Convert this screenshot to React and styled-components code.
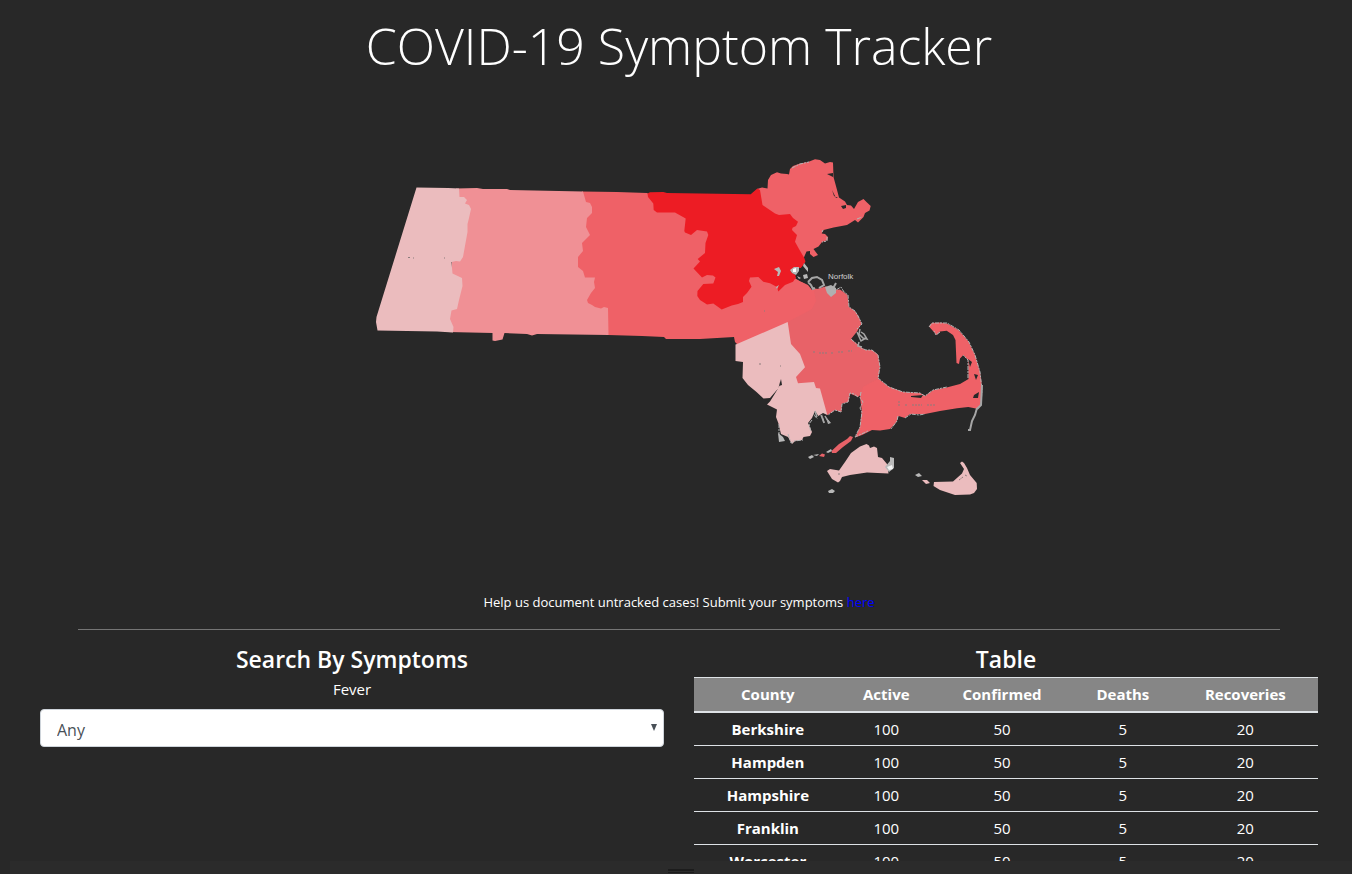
import React from "react";
import styled, { createGlobalStyle } from "styled-components";

const GlobalStyle = createGlobalStyle`
  *, *::before, *::after { box-sizing: border-box; }
  body {
    margin: 0;
    background: #282828;
    color: #fff;
    font-family: "Open Sans", "Noto Sans", sans-serif;
    font-size: 15px;
    line-height: 24px;
  }
`;

const Page = styled.div`
  display: flex;
  flex-direction: column;
  height: 100vh;
  overflow: hidden;
`;

const Content = styled.main`
  flex: 1;
  min-height: 0;
  overflow: hidden;
  padding: 12px 34px 0 40px;
  text-align: center;
`;

const Title = styled.h1`
  margin: 0;
  font-size: 50px;
  font-weight: 300;
  line-height: 68px;
`;

const MapFigure = styled.figure`
  display: flex;
  justify-content: center;
  margin: 60px 0 80px;
`;

const MapDrawing = styled.svg`
  display: block;
  width: 640px;
  max-width: 100%;
`;

const Prompt = styled.p`
  margin: 0;
  font-size: 13px;
  line-height: 24px;
`;

const PromptLink = styled.a`
  color: #0000ff;
  text-decoration: none;
`;

const Divider = styled.hr`
  margin: 15px 38px;
  border: 0;
  border-top: 1px solid #757575;
`;

const Columns = styled.div`
  display: grid;
  grid-template-columns: 1fr 1fr;
  gap: 30px;
`;

const Heading = styled.h2`
  margin: 0 0 4px;
  font-size: 23px;
  font-weight: 600;
  line-height: 28px;
`;

const FieldLabel = styled.label`
  display: block;
  margin-bottom: 8px;
`;

const Select = styled.select`
  display: block;
  width: 100%;
  height: 38px;
  padding: 4px 16px 0;
  appearance: none;
  border: 1px solid #ced4da;
  border-radius: 4px;
  background: #fff;
  color: #495057;
  font: inherit;
  font-size: 16px;
`;

const SelectBox = styled.div`
  position: relative;
`;

const Arrow = styled.svg`
  position: absolute;
  top: 15px;
  right: 7px;
  pointer-events: none;
`;

const Table = styled.table`
  width: 100%;
  border-collapse: collapse;
`;

const HeadCell = styled.th`
  height: 34px;
  padding: 4px;
  border-top: 1px solid #dee2e6;
  border-bottom: 2px solid #dee2e6;
  background: #868686;
  font-weight: 700;
`;

const Cell = styled.td`
  height: 33px;
  padding: 4px;
  border-top: 1px solid #dee2e6;
`;

const Footer = styled.footer`
  display: flex;
  align-items: flex-end;
  justify-content: center;
  height: 13px;
  margin-left: 10px;
  padding-bottom: 1px;
  background: #2b2b2b;
`;

const Grip = styled.div`
  width: 26px;
  height: 4px;
  border-top: 2px solid #1c1c1c;
  border-bottom: 1px solid #1c1c1c;
`;

const shades = {
  pale: "#ebbcbe",
  pink: "#f09095",
  coral: "#ef6167",
  rose: "#e86268",
  red: "#ed1c24",
};

const regions = [
  { name: "Worcester and Norfolk", fill: shades.coral, d: "M582 191.5L617 192 647 193 660 200 745 200 761 240 793 262 790 275 798 280 808 285 812 290 820 287 826 310 790 326 745 346 737 344 735 342 734 337 700 339 666 339 664 337 642 336 608 335 570 320 570 220Z" },
  { name: "Pink counties", fill: shades.pink, d: "M456 188.5L477 188 483 189 507 189 510 190 583 191.5 584 195 586 202 590 203 592 207 592 213 587 218 586 227 590 235 582 243 583 251 578 257 578 267 583 271 585 277.5 595 277.5 594 282 595 288 591 293 587 300 588 303 592 305 595 307 601 308.5 604 307 608 308 608.5 335 537 334 532 335.5 527 334 504.5 333 502.5 339.5 495 341 492.5 340.5 492.5 333 448 332Z" },
  { name: "Berkshire", fill: shades.pale, d: "M416.5 187.5L448 188 459 188.5 459.5 197 464 197 467 200 465 203.5 469 205 471 209 469 218 467.5 224 467.5 232 463 257 460 261.5 456 261 451.5 262 452.5 273.5 462 278 462.5 286 459 300 457 309 451.5 310.5 450 319 453.5 327 453 332.5 437 331.5 377.5 330.5 376 322 376.5 317Z" },
  { name: "Essex", fill: shades.coral, d: "M757 189L762 187.5 767.5 188.5 768 180 771 175 777 172.3 781 173.5 787 174 789 174.5 790 169 793 166 800 163.5 808 162 815 159.3 820 160 825 163.5 830 162 833 162.5 833.5 177 836.5 188 839 197.5 845 201.5 847 205 851 205.5 854 209 858 202 863.5 199 866.5 202 870.7 206 869.5 210.5 865 213 863.5 217 858 222.5 855 220 847 225 833.5 227.5 823.5 230 821.7 233.5 825 234 828 237 827.5 240 822 242 818.5 246.5 813.5 249 818 255 813.5 257 810 254 810 251 806.5 251.5 802 262 750 245Z" },
  { name: "Middlesex", fill: shades.red, d: "M647.5 193.5L650 192.3 663.3 192 667 193 750.7 194.3 757.3 188.5 760 190 762.5 205 775 213.5 779 215 790 214 793 218 798 221.7 796 226 792.5 227.7 792 230 797 235 795 241.7 799 249 804.3 258 806 263 801 268 795 268 791 272 797 276 793 281.7 785 285 778.3 291.5 777 287 770 283.3 763.3 281.7 758.3 277 750 277.5 749 281 751.5 286.7 747 293 743 297 743 302 738 304 731.7 305.5 721.7 309.5 713.3 303.5 707 304.5 700 300 697.3 296 697.5 291 703.3 284 713.3 283.5 715.5 277.5 713 275.5 707 275 702 277.5 693.5 268.5 700 261.5 697.7 259 705 253 705.5 243 708.3 235 707 231.5 697 230 691 235 685 232.5 684.3 231 685.7 218.5 675 212.5 657 212.5 653.7 210 653.3 203.5 648 197Z" },
  { name: "Plymouth", fill: shades.rose, d: "M787.5 322L812 309 816 301 814 291 820 287 826 286 830 290 840 289.5 847.5 295 849 307 855 311 858.5 316 861.5 323.5 857 331.5 851 339 861.5 347.5 865 350 872 350 878 354.5 880 367 878.3 379 865 387 861.5 394 858 397 850 393.5 848.5 402 842 403.5 841.5 412 835 410 827.5 415 810 400 780 370Z" },
  { name: "Bristol", fill: shades.pale, d: "M735.5 344.5L737 344 787.7 322 791 344 800 354 805 367.3 796 377 798 383.3 814 382 816 388 820 388.5 827.3 415 823 413 818.3 416 815 411 812 418 808 423 812 432 810 436 803.5 437 802 440 795 441 792 444 788 437 781 434 778.3 423 776 417 777 409.5 767 404.5 770 401.5 779 387 780.5 380 778.5 388 770 398 763.5 398.5 756.5 392 748 385 742.5 378 743 362 735.5 361Z" },
  { name: "Barnstable", fill: shades.coral, d: "M878 378.5L888.5 386.5 903.3 392 920 393 925 396 933.3 390 946.7 387.5 960 384 968.5 379 968.3 360 963.3 355 960 358.5 959 364 956.5 363 955.5 340 953 335 946.7 330.7 940 331.5 936.7 335 933 331 929 326.5 931.7 323 940 322.5 947 323.5 958.5 330 968.5 341.5 975 355 980 372 981.5 382 981 403 978.3 409 968.3 407 957 408.3 940 411 925 414 910 414 905 418 898.5 416 896.5 422 890 429 880 430.5 872 430 862 435 855 437.5 860 427 861.7 410 860 397 863 387Z" },
  { name: "Elizabeth Islands", fill: shades.rose, d: "M831.5 451L839 444 847 439 850 436 853 437 851 441 843 447 836 453 832 453ZM819 456L822 453.5 825 454.5 824 457Z" },
  { name: "Martha's Vineyard", fill: shades.pale, d: "M827 471L830 469 839 470.5 845 462 851 453 860 446.5 866.5 444 869 445.5 870 448 874 446.5 877 448 878 457 882 458 887 464 888.5 473.5 867 472.5 850 475 842 477 840 481 838 482.5 832 479Z" },
  { name: "Nantucket", fill: shades.pale, d: "M960 463L962 461.5 964 463 967 468 970 475 976.7 483 977 489 974 493 970 494.5 955 495 940 490 933.5 486 934 482 953 481.5 962 473.5 964 469ZM922 480L927 480 930 483 926 484Z" },
];

const coast = [
  "M829 287L836 290 841 287 844 292 848 295 849 307 855 311 858 316 862 324 857 329",
  "M851 339L861 348 866 350 872 350 878 355 880 367 878 378 889 387 903 392 920 393 925 396 933 390 947 387",
  "M858 397L854 394 850 393 848 402 842 404 841 412 835 410 828 415",
  "M861 392L860 398 863 402 860 408 862 412 860 427 855 437 868 431",
  "M779 424L779 434 781 441M788 434L791 443 794 441 803 440M812 420L809 424 811 432",
  "M929 327L932 323 947 323 959 330 969 342 975 355 980 372 982 390 981 405",
  "M940 332L936 335 934 331M968 378L968 360 963 355",
  "M898 416L897 421 891 429M905 418L911 414 919 415 925 414",
  "M792 168L800 164 809 162M857 219L862 217M822 232L823 230M827 237L827 241 822 242",
];

const islets = [
  "M774 269L779 267 781 271 779 276 777 276 778 272ZM776 287L779 285 777 289Z",
  "M790 270L794 267 799 267 799 271 796 275 792 273ZM804 263L808 268 808 272 803 266ZM797 276L801 278 799 279ZM803 275L807 274 808 278 804 279Z",
  "M778 433L783 437 785 441 779 442ZM813 413L818 419 815 417ZM822 414L825 423 823 422ZM826 417L831 423 828 424Z",
  "M808 457L812 455 814 457 810 459ZM813 455L819 454 817 456ZM826 452L831 449 832 451 828 453Z",
  "M828 491L832 489 835 491 833 493 829 493ZM915 475L919 473 922 476 918 477ZM885 467L890 461 890 457 894 458 894 468 889 472Z",
];

const harbors = [
  "M806 261L820 258 822 268 838 280 827 286 817 289 811 285 800 281 795 276 799 273 801 268Z",
  "M827 174L833 173 833 177ZM832 190L834 196 838 198 836 198ZM841 206L846 205 846 208 843 209Z",
  "M781 379L782 385 779 386ZM968 359L972 362 970 367ZM974 374L978 375 976 380ZM974 395L979 392 978 398 973 398ZM911 396L923 395 921 398 911 397Z",
];

const inlets = [
  "M808 282L812 278 817 277 822 280 824 285 819 288M808 282L811 285 813 289 815 288M836 283L831 292",
  "M977 408L975 415 972 421 970 430 968 430M982 385L981 405 977 409",
];

const finePoints = [
  "M860 329L859 334 863 338 867 339 864 334 861 332M857 332L861 341 866 338M859 342L858 346 862 347",
  "M815 411L817 417M821 415L824 423M825 416L829 423",
];

const MassachusettsMap = () => (
  <MapDrawing viewBox="359 140 640 370" role="img" aria-label="Map of Massachusetts counties">
    {regions.map((region) => (
      <path key={region.name} d={region.d} fill={region.fill} />
    ))}
    {harbors.map((d) => (
      <path key={d} d={d} fill="#282828" />
    ))}
    <g fill="none" stroke="#b4b4b4" strokeWidth="1" strokeDasharray="4 1 2 1">
      {coast.map((d) => (
        <path key={d} d={d} />
      ))}
    </g>
    <g fill="#b9b9b9">
      {islets.map((d) => (
        <path key={d} d={d} />
      ))}
    </g>
    <g fill="none" stroke="#a6a6a6" strokeWidth="2">
      {inlets.map((d) => (
        <path key={d} d={d} />
      ))}
    </g>
    <g fill="none" stroke="#a6a6a6" strokeWidth="1.5">
      {finePoints.map((d) => (
        <path key={d} d={d} />
      ))}
    </g>
    <path d="M825 287L831 285 836 288 836 293 831 297 827 293Z" fill="#b0b0b0" />
    <path d="M887 467L892 465 893 469 889 470Z" fill="#f2f2f2" />
    <path d="M793 269L796 268 796 272 793 272Z" fill="#fff" />
    <path d="M408 257.5h2M413 258h1M444 258h1M759 364h2M780 366h1M764 311h1M813 352h2M819 353h8M831 353h3M838 352h6M848 351h4M898 402h3M898 405h3M905 405h2M912 405h10M927 405h8M959 480l4 -3M965 475l2 1M838 474h2" fill="none" stroke="#8b7c7c" strokeWidth="1" strokeDasharray="2 1" />
    <text x="828" y="279" fill="#d0d0d0" fontSize="8" fontFamily="Liberation Sans, sans-serif">Norfolk</text>
  </MapDrawing>
);

const columns = ["County", "Active", "Confirmed", "Deaths", "Recoveries"];
const counties = ["Berkshire", "Hampden", "Hampshire", "Franklin", "Worcester"];

export default function App() {
  return (
    <Page>
      <GlobalStyle />
      <Content>
        <Title>COVID-19 Symptom Tracker</Title>
        <MapFigure>
          <MassachusettsMap />
        </MapFigure>
        <Prompt>
          Help us document untracked cases! Submit your symptoms <PromptLink href="#submit">here</PromptLink>
        </Prompt>
        <Divider />
        <Columns>
          <section>
            <Heading>Search By Symptoms</Heading>
            <FieldLabel htmlFor="fever">Fever</FieldLabel>
            <SelectBox>
              <Select id="fever" defaultValue="Any">
                <option>Any</option>
                <option>Yes</option>
                <option>No</option>
              </Select>
              <Arrow width="6" height="7" viewBox="0 0 6 7" aria-hidden="true">
                <path d="M0 0H6L3 7Z" fill="#495057" />
              </Arrow>
            </SelectBox>
          </section>
          <section>
            <Heading>Table</Heading>
            <Table>
              <thead>
                <tr>
                  {columns.map((name) => (
                    <HeadCell key={name} scope="col">{name}</HeadCell>
                  ))}
                </tr>
              </thead>
              <tbody>
                {counties.map((county) => (
                  <tr key={county}>
                    <Cell as="th" scope="row">{county}</Cell>
                    <Cell>100</Cell>
                    <Cell>50</Cell>
                    <Cell>5</Cell>
                    <Cell>20</Cell>
                  </tr>
                ))}
              </tbody>
            </Table>
          </section>
        </Columns>
      </Content>
      <Footer>
        <Grip />
      </Footer>
    </Page>
  );
}
